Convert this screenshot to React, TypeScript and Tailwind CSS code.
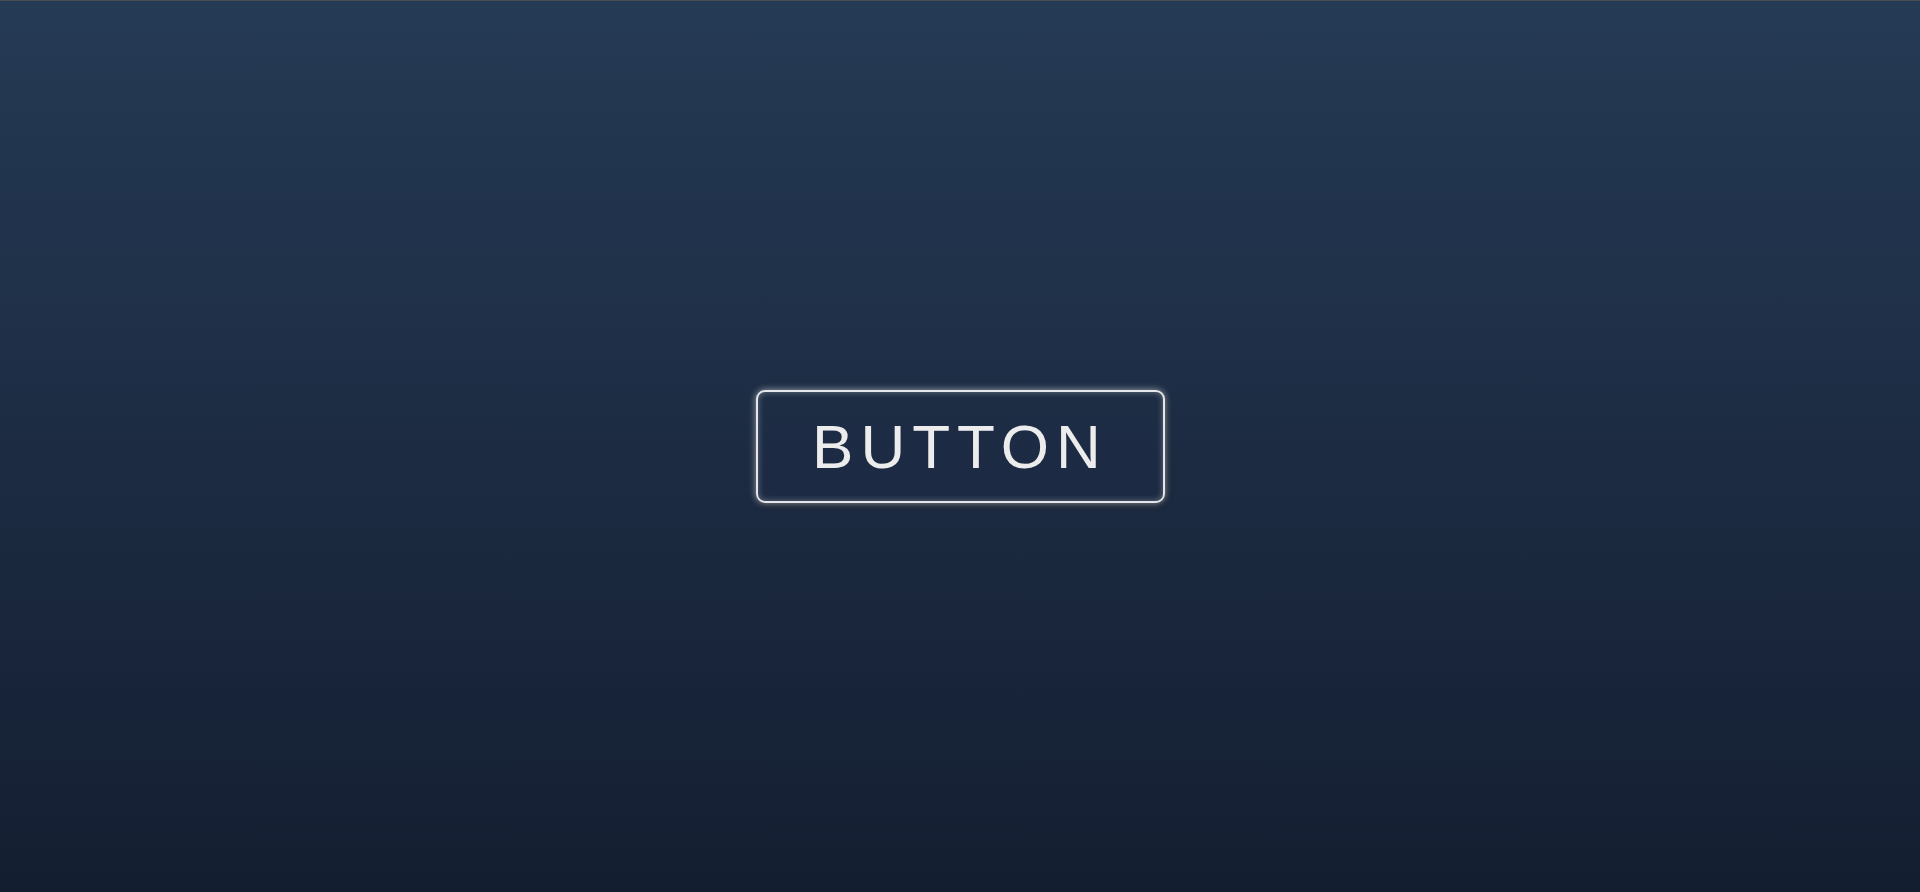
import React from "react";

export default function App() {
  return (
    <div className="w-full h-[892px] flex flex-col bg-[#202b3a]">
      <div className="h-px w-full bg-[#4a4d52]" />
      <div className="flex-1 flex items-center justify-center bg-gradient-to-b from-[#253a55] to-[#141e31]">
        <button
          className="w-[409px] h-[113px] flex items-center justify-center rounded-[9px] border-2 border-[#e4e6ea] bg-[#1e2d45]/40 text-[#ececec] text-[62px] tracking-[7px] shadow-[0_0_7px_rgba(255,255,255,0.6),inset_0_0_6px_rgba(255,255,255,0.35),2px_3px_6px_rgba(0,0,0,0.45)]"
          style={{ fontFamily: '"Liberation Sans", Arial, sans-serif' }}
        >
          BUTTON
        </button>
      </div>
    </div>
  );
}
